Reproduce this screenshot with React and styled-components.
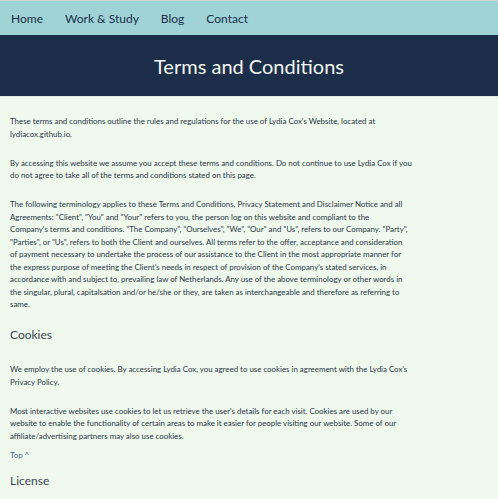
import React from 'react';
import styled, { createGlobalStyle } from 'styled-components';

const GlobalStyle = createGlobalStyle`
    html, body {
        margin: 0;
        padding: 0;
        background: #eff9ee;
        font-family: Lato, "Open Sans", sans-serif;
    }
    body {
        border-top: 1px solid #d4d6d6;
    }
`

const Nav = styled.nav`
    display: flex;
    align-items: center;
    height: 34px;
    background: #9fd3d6;
`

const NavLink = styled.a`
    padding: 0 11px;
    font-size: 12px;
    color: #1c2e4a;
    text-decoration: none;
`

const Banner = styled.header`
    display: flex;
    align-items: center;
    justify-content: center;
    height: 61px;
    background: #1c2e4a;
    border-bottom: 1px solid #dde8de;
`

const Title = styled.h1`
    margin: 0;
    font-size: 20px;
    font-weight: 400;
    color: #f2f7ee;
`

const Content = styled.main`
    padding: 18px 10px 0;
    max-width: 402px;
`

const Para = styled.p`
    margin: 0 0 16.5px;
    font-size: 7.9px;
    line-height: 12.5px;
    color: #2b3548;
`

const Heading = styled.h2`
    margin: ${props => props.first ? '10px' : '0'} 0 21px;
    font-size: 12px;
    font-weight: 400;
    line-height: 15px;
    color: #3d4656;
`

const TopLink = styled.a`
    display: block;
    margin: -10px 0 12px;
    font-size: 7.9px;
    line-height: 12px;
    color: #3e6e96;
    text-decoration: none;
`

const links = ['Home', 'Work & Study', 'Blog', 'Contact'];

const App = () => (
    <>
        <GlobalStyle />
        <Nav>
            {links.map(link => <NavLink key={link} href="#">{link}</NavLink>)}
        </Nav>
        <Banner>
            <Title>Terms and Conditions</Title>
        </Banner>
        <Content>
            <Para>These terms and conditions outline the rules and regulations for the use of Lydia Cox's Website, located at lydiacox.github.io.</Para>
            <Para>By accessing this website we assume you accept these terms and conditions. Do not continue to use Lydia Cox if you do not agree to take all of the terms and conditions stated on this page.</Para>
            <Para>The following terminology applies to these Terms and Conditions, Privacy Statement and Disclaimer Notice and all Agreements: "Client", "You" and "Your" refers to you, the person log on this website and compliant to the<br />Company's terms and conditions. "The Company", "Ourselves", "We", "Our" and "Us", refers to our Company. "Party", "Parties", or "Us", refers to both the Client and ourselves. All terms refer to the offer, acceptance and consideration<br />of payment necessary to undertake the process of our assistance to the Client in the most appropriate manner for the express purpose of meeting the Client's needs in respect of provision of the Company's stated services, in accordance with and subject to, prevailing law of Netherlands. Any use of the above terminology or other words in the singular, plural, capitalsation and/or he/she or they, are taken as interchangeable and therefore as referring to same.</Para>
            <Heading first>Cookies</Heading>
            <Para>We employ the use of cookies. By accessing Lydia Cox, you agreed to use cookies in agreement with the Lydia Cox's Privacy Policy.</Para>
            <Para>Most interactive websites use cookies to let us retrieve the user's details for each visit. Cookies are used by our website to enable the functionality of certain areas to make it easier for people visiting our website. Some of our affiliate/advertising partners may also use cookies.</Para>
            <TopLink href="#">Top ^</TopLink>
            <Heading>License</Heading>
        </Content>
    </>
);

export default App;
